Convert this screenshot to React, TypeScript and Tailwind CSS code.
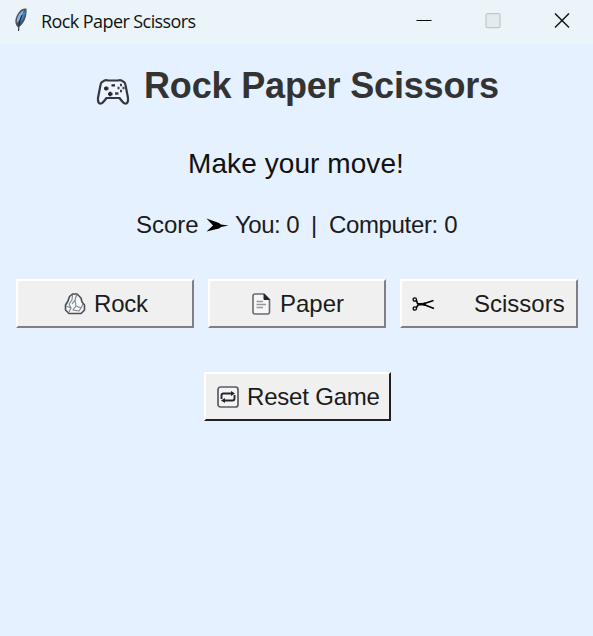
import React from "react";

function Feather() {
  return (
    <svg width="16" height="26" viewBox="0 0 16 26" className="ml-[13px] mt-[7px] shrink-0">
      <path d="M4.500 20C1 16 2 10 6 5C8 2 11 1 13.500 1.500C14 6 13 12 10 16C8.500 18.500 7 19.500 4.500 20Z" fill="#4b535d" />
      <path d="M4 16C3 11 6 6 11 3C9.500 8 8 12 4 16Z" fill="#82b7ee" />
      <path d="M6 17C10 13 12.500 8 12.500 3C9.500 7 7.500 11 6 17Z" fill="#3f82d0" />
      <path d="M9 8Q6 14 5.500 24" fill="none" stroke="#20252c" strokeWidth="1.100" />
    </svg>
  );
}

function Gamepad() {
  return (
    <svg width="34" height="28" viewBox="0 0 34 28" className="shrink-0" fill="none">
      <path d="M7 3.500Q9 1.500 12 2.500H22Q25 1.500 27 3.500Q29 4 29.500 7L32 20Q32.500 26 29 25.500Q27.500 25.500 23.500 20H10.500Q6.500 25.500 5 25.500Q1.500 26 2 20L4.500 7Q5 4 7 3.500Z" stroke="#353840" strokeWidth="2.200" fill="#edf4fb" />
      <path d="M8 10.500H12.500M10.200 8.500V12.500M12 16H16.500M14.200 13.800V18.200M15.500 7.300H19" stroke="#252932" strokeWidth="2.300" />
      <path d="M19 15.500H22.500M24 7H26M26.500 10H28.500M24 13H26M21.500 10H23.500" stroke="#443b57" strokeWidth="2.600" />
    </svg>
  );
}

function RockIcon() {
  return (
    <svg width="22" height="23" viewBox="0 0 22 23" className="shrink-0" fill="none" stroke="#4a4e55" strokeLinejoin="round">
      <path d="M8.500 2L13 2L17 6L18 10L20.500 13L20.500 18L17 21.500H5L1.500 18V13L4 9L5.500 4.500Z" fill="#f7f7f7" strokeWidth="1.600" />
      <path d="M8.500 3L8 8L5 12L7 16L5 20M12.500 3L11 8L12 14L17 16L19 12M11 8L8 12M12 14L9 18L15 19L17 16M2 14L7 16" stroke="#808a95" strokeWidth="1.200" />
    </svg>
  );
}

function PaperIcon() {
  return (
    <svg width="19" height="22" viewBox="0 0 19 22" className="shrink-0" fill="none">
      <path d="M3 1H12L17.500 6.500V19Q17.500 21 15.500 21H3Q1 21 1 19V3Q1 1 3 1Z" fill="#f6f6f6" stroke="#666c73" strokeWidth="1.600" />
      <path d="M12 1V6.500H17.500Z" fill="#22252a" stroke="#22252a" />
      <path d="M4.500 8.500H11M4.500 11.500H14M4.500 14.500H11" stroke="#979797" strokeWidth="1.400" />
    </svg>
  );
}

function ScissorsIcon() {
  return (
    <svg width="23" height="16" viewBox="0 0 23 16" className="shrink-0" fill="none" stroke="#000">
      <circle cx="2.800" cy="3.500" r="1.700" strokeWidth="1.300" />
      <ellipse cx="2.800" cy="12.500" rx="1.700" ry="1.700" strokeWidth="1.300" />
      <path d="M4.500 4.500L5.500 7.500L11 8.300L22 12.500M4.500 11.500L6 9L11 8L21.500 4.500" strokeWidth="1.600" />
      <path d="M6 8L13 6.800L14 9.500L8 9Z" fill="#000" strokeWidth="0.500" />
    </svg>
  );
}

function ResetIcon() {
  return (
    <svg width="22" height="22" viewBox="0 0 22 22" className="shrink-0" fill="none">
      <rect x="1" y="1" width="20" height="20" rx="2.500" fill="#f4f4f4" stroke="#5b5b68" strokeWidth="1.700" />
      <path d="M4.500 13V9.500Q4.500 7.500 6.500 7.500H16M17.500 9V12.500Q17.500 14.500 15.500 14.500H6" stroke="#262626" strokeWidth="1.900" />
      <path d="M14 5L18 7.500L14 10ZM8 12L4 14.500L8 17Z" fill="#262626" />
    </svg>
  );
}

const raised =
  "flex items-center border-2 border-t-white border-l-white bg-[#f0f0f0] text-2xl leading-8 whitespace-pre";

export default function App() {
  return (
    <div className="h-[636px] w-[593px] overflow-hidden bg-[#e5f1ff] font-['Liberation_Sans',Arial,sans-serif] text-[#1b1b1b]">
      <header className="flex h-11 items-start bg-[#ebf4f8]">
        <Feather />
        <span className="ml-3 mt-[7px] w-[160px] whitespace-nowrap font-['Open_Sans',sans-serif] text-[18px] leading-7 tracking-[-0.58px] text-[#111]">
          Rock Paper Scissors
        </span>
        <div className="ml-auto mr-[23px] mt-[13px] flex gap-[53px]">
          <svg width="16" height="16" viewBox="0 0 16 16"><path d="M0.500 7.500H15.500" stroke="#000" /></svg>
          <svg width="16" height="16" viewBox="0 0 16 16"><rect x="1" y="0.700" width="14" height="14" rx="1.500" fill="#e4ebee" stroke="#c0c7ca" strokeWidth="1.200" /></svg>
          <svg width="16" height="16" viewBox="0 0 16 16"><path d="M1 0.500L15 14.500M15 0.500L1 14.500" stroke="#16191c" strokeWidth="1.500" /></svg>
        </div>
      </header>
      <main className="flex flex-col">
        <h1 className="mt-[18px] flex h-12 items-start pl-24 text-[36px] font-bold leading-[48px] text-[#333]">
          <span className="mt-4"><Gamepad /></span>
          <span className="ml-3.5 whitespace-nowrap tracking-[-0.17px]">Rock Paper Scissors</span>
        </h1>
        <p className="mt-[34px] pl-[188px] text-[28px] leading-10 tracking-[0.08px] text-[#111]">Make your move!</p>
        <div className="mt-[25px] flex h-8 items-center whitespace-pre pl-[136px] text-2xl leading-8">
          <span className="w-[70px]">Score</span>
          <svg width="23" height="15" viewBox="0 0 23 15" className="shrink-0">
            <path d="M0.500 0.500L13 5L15 6.500L22.500 7.500L15 9L13 10.500L0.500 13.500L7 7.500Z" fill="#000" />
          </svg>
          <span className="ml-1.5 w-[76px] tracking-[-0.5px]">You: 0</span>
          <span className="w-[18px]">|</span>
          <span className="tracking-[-0.35px]">Computer: 0</span>
        </div>
        <div className="mt-[38px] flex gap-3.5 pl-4">
          <button className={raised + " h-[49px] w-[178px] border-r-[#808080] border-b-[#808080] pl-[46px]"}>
            <RockIcon />
            <span className="ml-2 tracking-[-0.2px]">Rock</span>
          </button>
          <button className={raised + " h-[49px] w-[178px] border-r-[#808080] border-b-[#808080] pl-[42px]"}>
            <PaperIcon />
            <span className="ml-[9px]">Paper</span>
          </button>
          <button className={raised + " h-[49px] w-[178px] border-r-[#808080] border-b-[#808080] pl-[10px]"}>
            <ScissorsIcon />
            <span className="ml-[39px]">Scissors</span>
          </button>
        </div>
        <button className={raised + " ml-[204px] mt-11 h-[49px] w-[187px] border-r-[#202020] border-b-[#202020] pl-[11px]"}>
          <ResetIcon />
          <span className="ml-2 tracking-[-0.2px]">Reset Game</span>
        </button>
      </main>
    </div>
  );
}
